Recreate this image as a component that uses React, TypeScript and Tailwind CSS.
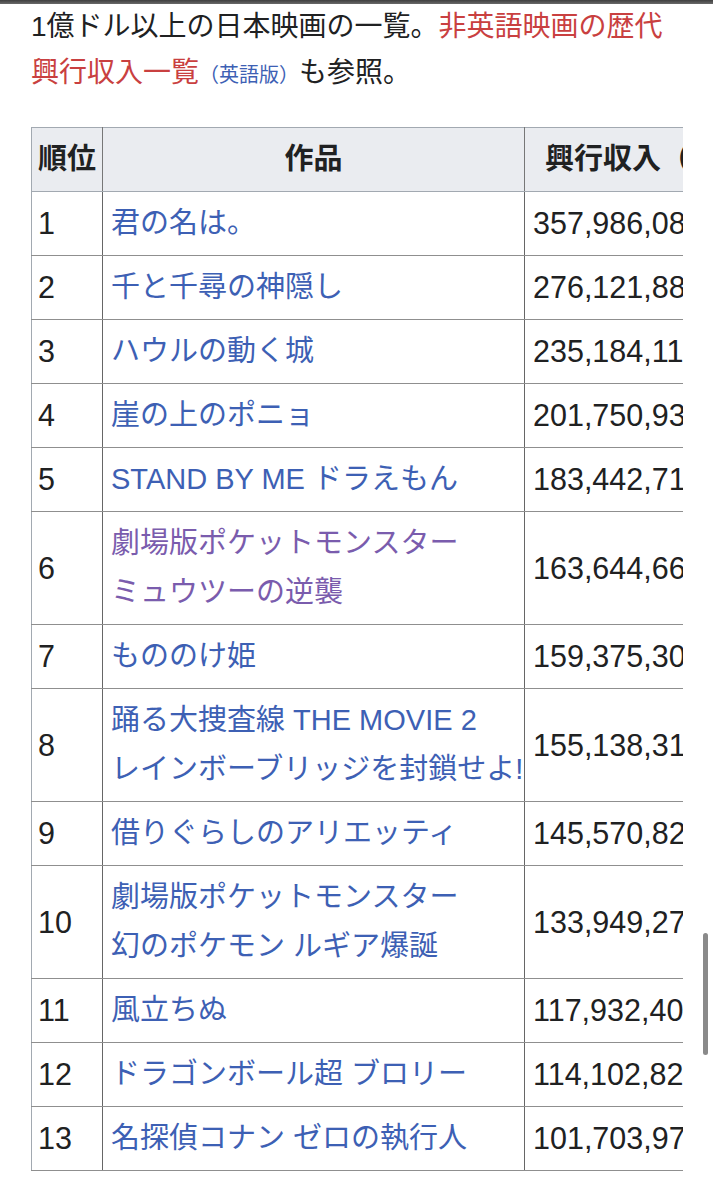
import React from "react"

interface Film {
  rank: number
  title: string[]
  gross: string
  visited?: boolean
}

const films: Film[] = [
  { rank: 1, title: ["君の名は。"], gross: "357,986,087" },
  { rank: 2, title: ["千と千尋の神隠し"], gross: "276,121,880" },
  { rank: 3, title: ["ハウルの動く城"], gross: "235,184,110" },
  { rank: 4, title: ["崖の上のポニョ"], gross: "201,750,937" },
  { rank: 5, title: ["STAND BY ME ドラえもん"], gross: "183,442,714" },
  { rank: 6, title: ["劇場版ポケットモンスター", "ミュウツーの逆襲"], gross: "163,644,662", visited: true },
  { rank: 7, title: ["もののけ姫"], gross: "159,375,308" },
  { rank: 8, title: ["踊る大捜査線 THE MOVIE 2", "レインボーブリッジを封鎖せよ!"], gross: "155,138,312" },
  { rank: 9, title: ["借りぐらしのアリエッティ"], gross: "145,570,827" },
  { rank: 10, title: ["劇場版ポケットモンスター", "幻のポケモン ルギア爆誕"], gross: "133,949,270" },
  { rank: 11, title: ["風立ちぬ"], gross: "117,932,401" },
  { rank: 12, title: ["ドラゴンボール超 ブロリー"], gross: "114,102,821" },
  { rank: 13, title: ["名探偵コナン ゼロの執行人"], gross: "101,703,971" },
]

export default function App() {
  return (
    <div className="relative min-h-[1200px] bg-white font-['Liberation_Sans','Noto_Sans_CJK_JP',sans-serif] text-[29px] text-[#202122]">
      <div className="h-[4px] bg-gradient-to-b from-[#3f3f3f] to-[#6a6a6a]" />

      <p className="px-[31px] text-[28px] leading-[46px] whitespace-nowrap">
        1億ドル以上の日本映画の一覧。<span className="text-[#c94040]">非英語映画の歴代</span>
        <br />
        <span className="text-[#c94040]">興行収入一覧</span>
        <span className="text-[20px] text-[#3d60b4]">（英語版）</span>も参照。
      </p>

      <div className="ml-[31px] mt-[29px] w-[652px] overflow-hidden">
        <table className="w-[800px] table-fixed border-collapse">
          <colgroup>
            <col className="w-[71px]" />
            <col className="w-[422px]" />
            <col className="w-[307px]" />
          </colgroup>
          <thead>
            <tr className="bg-[#eaecf0] font-bold">
              <th className="border border-[#a2a9b1] border-r-[#777] px-[4px] py-[7px] text-center leading-[49px] whitespace-nowrap">
                順位
              </th>
              <th className="border border-[#a2a9b1] border-r-[#777] px-[8px] py-[7px] text-center leading-[49px]">作品</th>
              <th className="border border-[#a2a9b1] px-[8px] py-[7px] text-left leading-[49px] whitespace-nowrap">
                <span className="pl-[12px]">興行収入（米ドル）</span>
              </th>
            </tr>
          </thead>
          <tbody>
            {films.map((film) => (
              <tr key={film.rank}>
                <td className="border border-[#8f8f8f] border-l-[#a2a9b1] border-r-[#666] px-[6px] py-[7px] text-[30.5px] leading-[49px]">
                  {film.rank}
                </td>
                <td
                  className={`border border-[#8f8f8f] border-r-[#666] px-[8px] py-[7px] leading-[49px] whitespace-nowrap ${
                    film.visited ? "text-[#7a5cad]" : "text-[#3d60b4]"
                  }`}
                >
                  {film.title.map((line, i) => (
                    <div key={i}>{line}</div>
                  ))}
                </td>
                <td className="border border-[#8f8f8f] px-[8px] py-[7px] text-[30.5px] leading-[49px] whitespace-nowrap">
                  {film.gross}
                </td>
              </tr>
            ))}
          </tbody>
        </table>
      </div>

      <div className="absolute left-[703px] top-[933px] h-[122px] w-[5px] rounded-full bg-[#8a8a8a]" />
    </div>
  )
}
